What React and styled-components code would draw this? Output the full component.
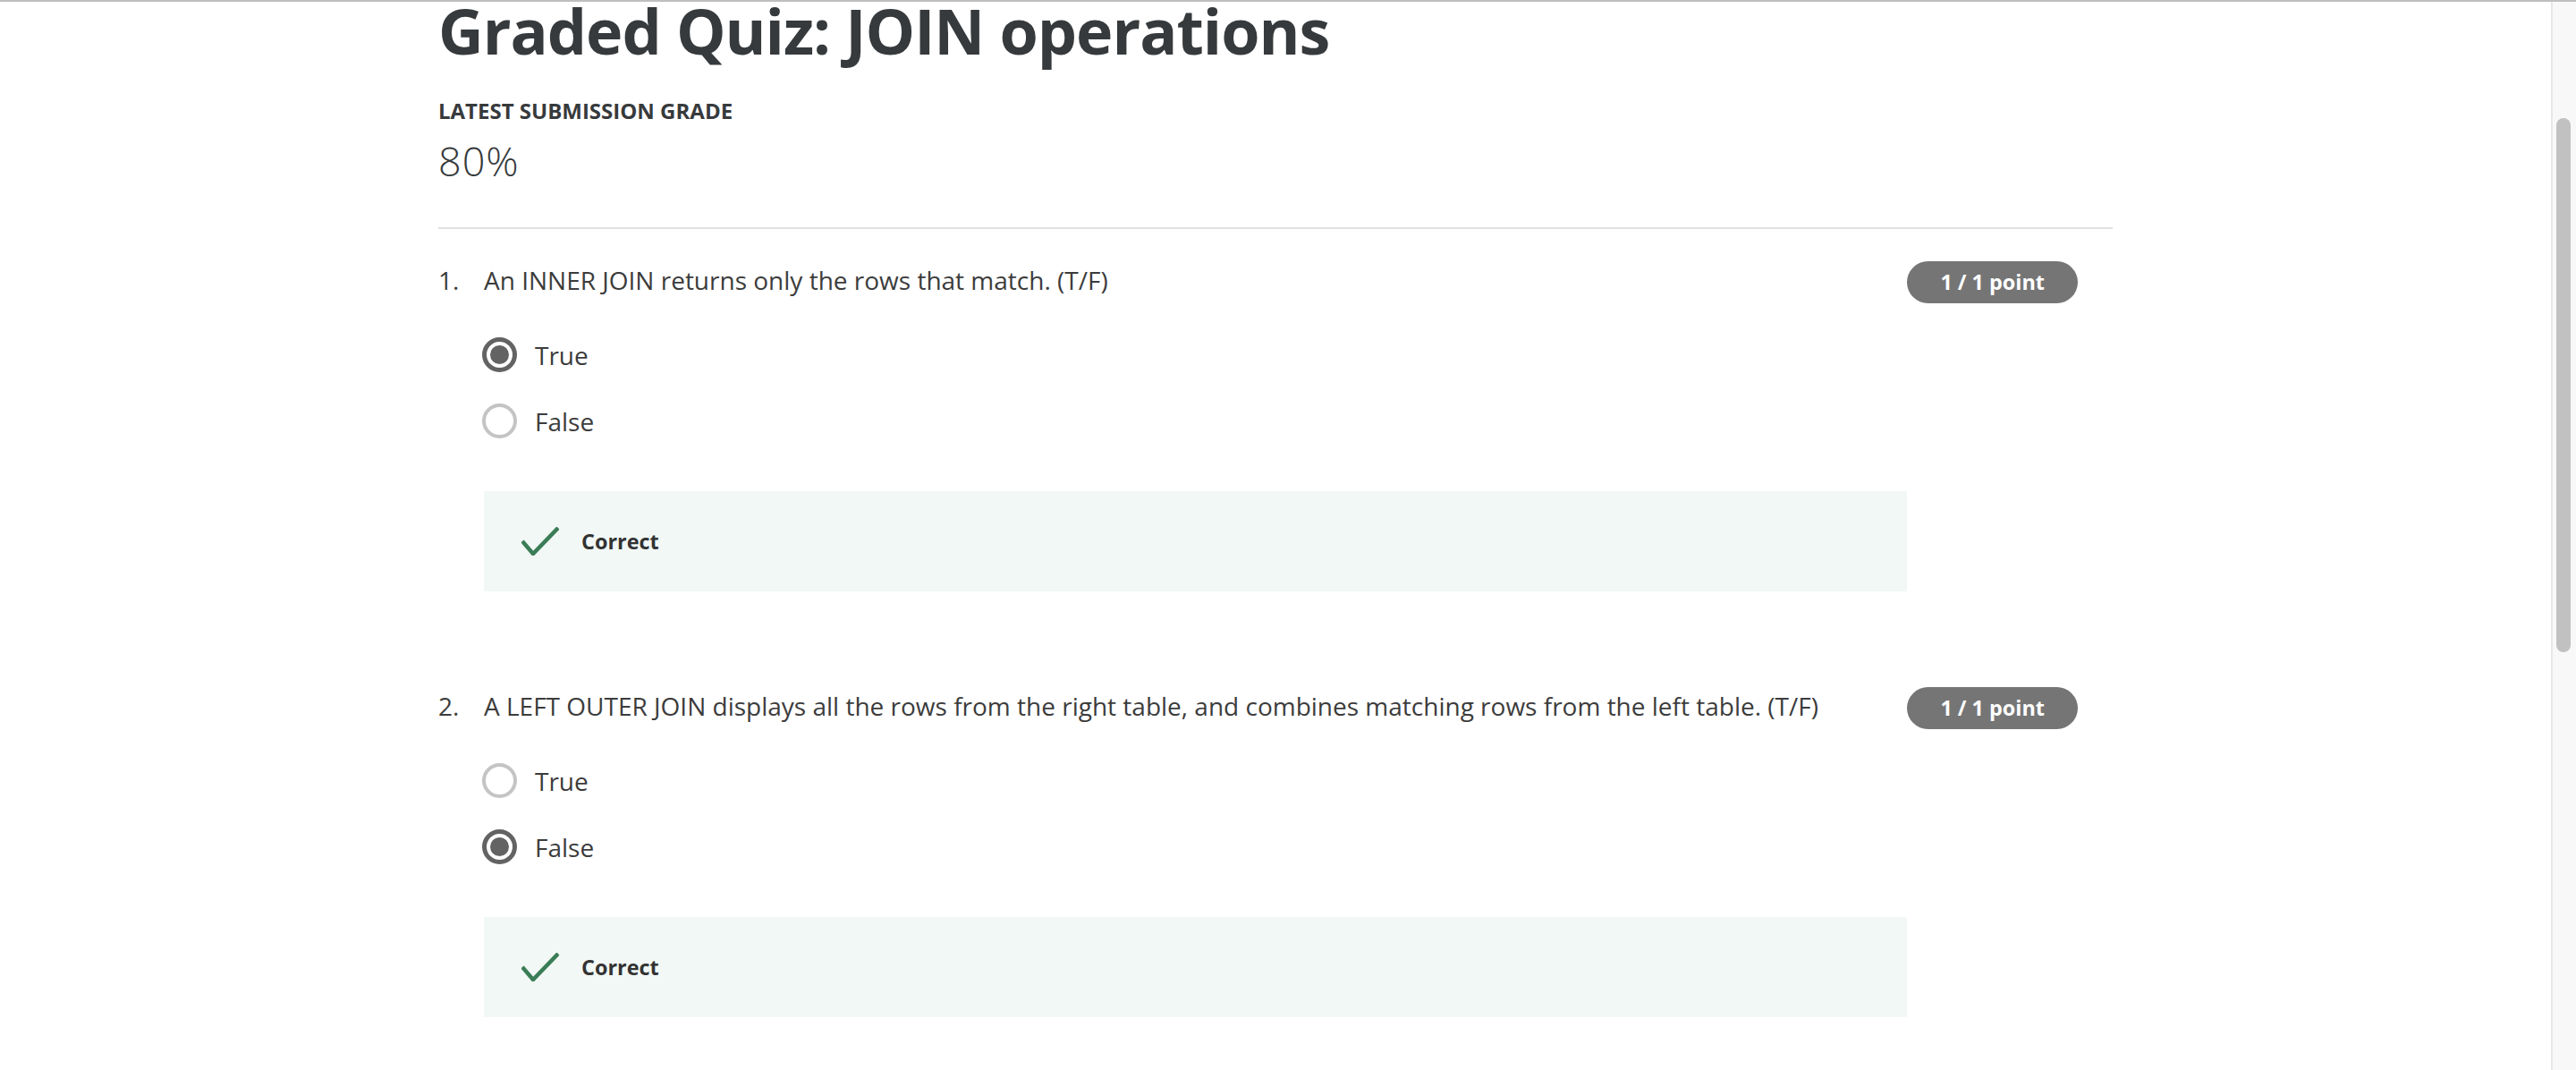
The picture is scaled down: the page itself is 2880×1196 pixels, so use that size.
import styled, { createGlobalStyle } from 'styled-components';

const GlobalStyle = createGlobalStyle`
  html, body {
    margin: 0;
    padding: 0;
    background: #fff;
    font-family: "Open Sans", "Noto Sans", Arial, sans-serif;
    color: #3c3c3c;
  }
  * { box-sizing: border-box; }
`;

const Page = styled.div`
  height: 100vh;
  display: flex;
  border-top: 2px solid #bfbfbf;
  overflow: hidden;
`;

const Main = styled.main`
  flex: 1;
  overflow: hidden;
`;

const Container = styled.div`
  width: 1872px;
  margin: 0 auto;
`;

const Title = styled.h1`
  margin: -11px 0 0;
  font-size: 70px;
  line-height: 86px;
  letter-spacing: -1px;
  font-weight: 700;
  color: #373a3c;
`;

const GradeLabel = styled.div`
  margin-top: 31px;
  font-size: 24px;
  line-height: 32px;
  font-weight: 700;
  text-transform: uppercase;
  color: #373a3c;
`;

const GradeValue = styled.div`
  margin-top: 12px;
  font-size: 45px;
  line-height: 56px;
  font-weight: 300;
  letter-spacing: 1px;
  color: #373a3c;
`;

const Divider = styled.hr`
  margin: 46px 0 36px;
  border: 0;
  height: 2px;
  background: #e1e1e1;
`;

const Question = styled.section`
  display: flex;
  align-items: flex-start;
  margin-bottom: 107px;
`;

const Number = styled.div`
  width: 51px;
  flex: none;
  font-size: 28px;
  line-height: 42px;
`;

const Body = styled.div`
  flex: 1;
`;

const Prompt = styled.div`
  font-size: 28px;
  line-height: 42px;
`;

const Options = styled.div`
  margin-top: 41px;
  display: flex;
  flex-direction: column;
  gap: 31px;
`;

const Option = styled.label`
  display: flex;
  align-items: center;
  height: 43px;
  margin-left: -2px;
  font-size: 28px;
  gap: 20px;
`;

const Radio = styled.span`
  width: 39px;
  height: 39px;
  flex: none;
  border-radius: 50%;
  border: ${p => (p.$checked ? '5px solid #636363' : '4px solid #c4c4c4')};
  display: flex;
  align-items: center;
  justify-content: center;

  &::after {
    content: '';
    width: 21px;
    height: 21px;
    border-radius: 50%;
    background: ${p => (p.$checked ? '#636363' : 'transparent')};
  }
`;

const Feedback = styled.div`
  margin-top: 57px;
  display: flex;
  align-items: center;
  gap: 25px;
  padding: 40px 42px;
  background: #f2f8f5;
  font-size: 23.4px;
  line-height: 32px;
  font-weight: 700;
  color: #333;
`;

const Badge = styled.div`
  flex: none;
  margin-right: 39px;
  height: 47px;
  padding: 0 37px;
  border-radius: 24px;
  background: #757575;
  color: #fff;
  font-size: 23.4px;
  line-height: 47px;
  font-weight: 700;
`;

const Track = styled.div`
  width: 28px;
  flex: none;
  padding: 130px 0 0 4px;
  background: #f8f8f8;
  border-left: 2px solid #e8e8e8;
`;

const Thumb = styled.div`
  width: 16px;
  height: 597px;
  border-radius: 8px;
  background: #c1c1c1;
`;

const CheckIcon = () => (
  <svg width="42" height="32" viewBox="0 0 42 32" fill="none">
    <polyline points="1,16 13,30 41,1" stroke="#3a7d57" strokeWidth="4.5" />
  </svg>
);

const questions = [
  {
    text: 'An INNER JOIN returns only the rows that match. (T/F)',
    answer: 'True',
  },
  {
    text: 'A LEFT OUTER JOIN displays all the rows from the right table, and combines matching rows from the left table. (T/F)',
    answer: 'False',
  },
];

export default function App() {
  return (
    <>
      <GlobalStyle />
      <Page>
        <Main>
          <Container>
            <Title>Graded Quiz: JOIN operations</Title>
            <GradeLabel>Latest Submission Grade</GradeLabel>
            <GradeValue>80%</GradeValue>
            <Divider />
            {questions.map((q, i) => (
              <Question key={i}>
                <Number>{i + 1}.</Number>
                <Body>
                  <Prompt>{q.text}</Prompt>
                  <Options>
                    {['True', 'False'].map(opt => (
                      <Option key={opt}>
                        <Radio $checked={opt === q.answer} />
                        {opt}
                      </Option>
                    ))}
                  </Options>
                  <Feedback>
                    <CheckIcon />
                    Correct
                  </Feedback>
                </Body>
                <Badge>1 / 1 point</Badge>
              </Question>
            ))}
          </Container>
        </Main>
        <Track>
          <Thumb />
        </Track>
      </Page>
    </>
  );
}
